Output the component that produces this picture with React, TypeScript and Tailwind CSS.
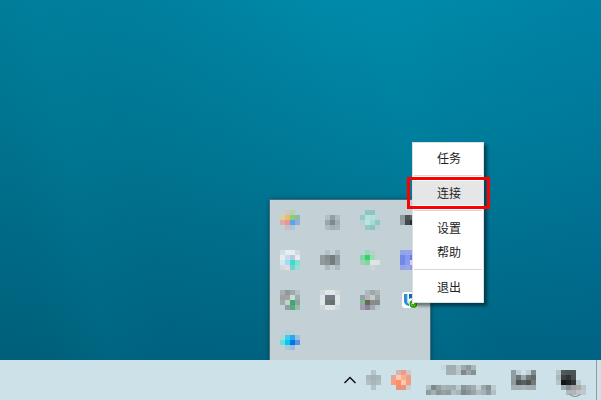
type Cells = string[];

const cellSize = 5;

function Mosaic({ rows, label }: { rows: Cells; label: string }) {
  const grid = rows.map((row) => row.split(" "));
  const width = Math.max(...grid.map((r) => r.length)) * cellSize;
  const height = grid.length * cellSize;
  return (
    <svg width={width} height={height} viewBox={`0 0 ${width} ${height}`} role="img" aria-label={label} shapeRendering="crispEdges" className="block shrink-0">
      {grid.map((row, y) =>
        row.map((color, x) =>
          color === "-" ? null : (
            <rect key={`${x}-${y}`} x={x * cellSize} y={y * cellSize} width={cellSize} height={cellSize} fill={`#${color}`} />
          ),
        ),
      )}
    </svg>
  );
}

const trayApps: { name: string; rows: Cells }[] = [
  { name: "App 1", rows: ["- cdc9c0 b6d3ad -", "d2d3a0 ecba70 88d070 8bbbac", "e1aa9f e59796 5da4ee 8faed9", "- c7bec3 a9c7dc -"] },
  { name: "App 2", rows: ["- - - -", "- b2bfc4 939fa2 aebac0", "- 9aa6aa 7e8989 a2adb1", "- afbcc1 a2afb3 a7b4b8"] },
  { name: "App 3", rows: ["- 8cc6c2 8cc6c2 -", "94cbc6 b5e1dc b2dfdb b8d4d6", "b5d1d4 bce4df a5d9d2 91c7c3", "- 94c8c3 8bc4bf b9cfd3"] },
  { name: "App 4", rows: ["- - - -", "8c989d 4d5356 5b6367 747d80", "939fa4 45494c 272b2f 555b5e", "- - - -"] },
  { name: "App 5", rows: ["d3dfe2 e7eef0 e8eef0 d0dbde", "e5eced c6dce8 b7c9e3 e8eced", "d6e8ed 9bdcf7 42dac8 83e0cf", "cddbde ead7df 69d8cb 9bded5"] },
  { name: "App 6", rows: ["- b1c1c5 - aebdc2", "8f9b9f 848e91 747d7e 909b9e", "8f9a9e 899393 747d7e 949fa2", "- adbabd c0cbcd aebbbe"] },
  { name: "App 7", rows: ["- 9cd5b7 b9d1cd -", "7cd7a1 31d36a 9bdcb4 bfd2d5", "9dd2b8 85d4a1 dde4e3 e1e3e3", "- c1d2d5 cbd6d9 -"] },
  { name: "App 8", rows: ["91a4e7 93a5e9 94a5ea 91a4e7", "7188e8 8997ec 627fee 7188e8", "7188e8 8e9aea d4d3ed 7188e8", "94a5e1 99aaea 8998ea 91a4e7"] },
  { name: "App 9", rows: ["a4b0b2 8f999b 9fa9ac b5c1c7", "9fa0a1 a4a09f c9ddd4 a0acae", "9eaaac c2d2ca 42a76d 8fa49e", "- 929f9f 59a982 97bdad"] },
  { name: "App 10", rows: ["cfd9db e0e5e7 e0e5e7 cfd9db", "dfe5e7 7b788b 797887 dfe5e7", "e2e7e9 657975 61736f dfe5e7", "cdd8da dfe5e7 dfe5e7 cfd9db"] },
  { name: "App 11", rows: ["- adbabc 9ea8aa aab5b8", "95a0a3 b2b3bb c9c9cd 9da5a6", "83b795 676a50 898b8b 878b8c", "b197b3 8783a5 a0abad b8c7ca"] },
];

const lastApp: Cells = ["- bccfd7 bccfd7 -", "aed7d5 3cd1eb 2ca3f6 9fbfd9", "69ded2 00cafa 0073ec 5796df", "- a2cbd9 9bbad8 -"];

function SyncIcon() {
  return (
    <svg width="20" height="20" viewBox="0 0 20 20" role="img" aria-label="Sync client" className="block">
      <rect x="2" y="2" width="16" height="16" rx="3" fill="#fff" />
      <path d="M4 4h3v7q0 2 2 3v2q-5-1-5-5z" fill="#2f8ccc" />
      <path d="M7.500 4v6.500q0 2 2 3" fill="none" stroke="#a5dcf2" strokeWidth="1.200" />
      <path d="M9 4h5v6l-3-2-2 1z" fill="#1c61b6" />
      <circle cx="13.500" cy="14" r="3" fill="#fff" stroke="#36a10c" strokeWidth="2" />
      <path d="m12 14 1.500 1.500 2.500-3" fill="none" stroke="#36a10c" strokeWidth="1.200" />
    </svg>
  );
}

function Item({ children, selected = false }: { children: string; selected?: boolean }) {
  return (
    <li role="none" className="relative">
      <button
        role="menuitem"
        className={`block h-6 w-full pl-0.5 text-center text-xs leading-6 text-[#222] ${selected ? "bg-[#e6e6e6]" : "bg-white"}`}
      >
        {children}
      </button>
      {selected && <span className="pointer-events-none absolute -top-1 -right-[7px] -bottom-1 -left-1.5 border-3 border-[#ff0000]" />}
    </li>
  );
}

function Divider() {
  return <li role="separator" className="mx-px my-[5px] h-px bg-[#d7d7d7]" />;
}

function ContextMenu() {
  return (
    <ul role="menu" className="absolute bottom-[57px] left-[142px] w-[72px] border border-[#dcdfe3] bg-white py-[3px] shadow-[3px_3px_3px_rgba(0,0,0,0.45)]">
      <Item>任务</Item>
      <Divider />
      <Item selected>连接</Item>
      <Divider />
      <Item>设置</Item>
      <Item>帮助</Item>
      <Divider />
      <Item>退出</Item>
    </ul>
  );
}

function TrayFlyout() {
  return (
    <section aria-label="Hidden icons" className="relative w-40 bg-[#c3d1d7] shadow-[0_0_5px_rgba(0,0,0,0.5)] outline outline-[#3f6e7c]">
      <div className="grid grid-cols-4 gap-5 p-2.5">
        {trayApps.map((app) => (
          <Mosaic key={app.name} label={app.name} rows={app.rows} />
        ))}
        <SyncIcon />
        <Mosaic label="App 12" rows={lastApp} />
      </div>
      <ContextMenu />
    </section>
  );
}

function Taskbar() {
  return (
    <footer className="relative flex h-10 items-center justify-end bg-[#cde1e8]">
      <button aria-label="Show hidden icons" className="mr-[9px] block">
        <svg width="14" height="8" viewBox="0 0 14 8" className="block">
          <path d="M1.500 7 7 1.500 12.500 7" fill="none" stroke="#111" strokeWidth="1.500" />
        </svg>
      </button>
      <div className="mr-2.5">
        <Mosaic label="Tray 1" rows={["- b2c5cb -", "aab8bc a6b1b3 aab6b9", "b2c0c4 aab5b7 b0bcc0", "- b1c4ca -"]} />
      </div>
      <div className="mr-[15px]">
        <Mosaic label="Tray 2" rows={["- d6b4ac e69e87 d4c7c4", "dfa898 ffcab6 ffab8d e7a08a", "ff9c79 ff9066 ffc5b0 f49c7d", "- e99277 ea9478 cfcdcd"]} />
      </div>
      <div className="mr-[15px] flex h-[30px] flex-col items-start justify-between">
        <div className="pl-[15px]">
          <Mosaic label="Time" rows={["c6d8de a0adb2 a0adb1 b8c8cd 9eaaae 8d989b aab6ba", "- a3b1b5 a2b0b4 b6c5ca 7e898b 98a4a7 869194"]} />
        </div>
        <Mosaic
          label="Date"
          rows={[
            "b2c1c7 7e898c 94a0a4 a6b4b8 a1aeb2 a0adb1 bbcace 88959a 96a2a6 a0adb1 c2d3d8 9ba8ac 839094 bccbd0",
            "909c9f a3afb3 899598 95a2a5 909c9f b0bfc3 a7b5b9 7d898c 899598 98a4a8 aebdc2 a5b3b7 8e9b9e b0bfc3",
          ]}
        />
      </div>
      <div className="mr-5">
        <Mosaic label="Input method" rows={["8f9da2 bdced4 - bdced4 82898a", "929da1 6d7475 9ca9ac 6f7778 646b6b", "8e999c 4d5353 5a6161 4c5253 717878", "a3b0b5 a2afb3 a8b6ba a2afb3 a0acb0"]} />
      </div>
      <div className="relative mt-[5px] mr-2.5">
        <Mosaic
          label="Notifications"
          rows={[
            "b5c4c9 51595a 4b5354 4b5354 - -",
            "aab7bb 394142 2e3435 485051 - -",
            "b5c4c9 111718 1c2121 333434 bac5c8 -",
            "- a0adb2 879093 a3a2a2 aaa9aa b9c4c8",
            "- - adb9bc b2b5b7 c1c3c4 bcc9ce",
          ]}
        />
        <svg width="14" height="4" viewBox="0 0 14 4" className="absolute -bottom-[3px] left-3 block">
          <path d="M1 0q6 5 12 0" fill="none" stroke="#80898c" />
        </svg>
      </div>
      <button aria-label="Show desktop" className="h-10 w-[5px] border-l border-[#8f9da2]" />
    </footer>
  );
}

export default function App() {
  return (
    <div className="flex min-h-screen flex-col font-['Microsoft_YaHei','Noto_Sans_CJK_SC',sans-serif]">
      <main className="flex flex-1 items-end justify-end overflow-hidden bg-[linear-gradient(78deg,transparent_8%,rgba(0,150,175,0.08)_16%,transparent_26%,transparent_62%,rgba(0,150,185,0.07)_67%,transparent_74%),linear-gradient(75deg,rgba(0,84,104,0.3)_0%,rgba(0,90,112,0.2)_35%,transparent_60%),linear-gradient(90deg,transparent_70%,rgba(0,90,140,0.16)_100%),linear-gradient(180deg,#0089a9_0%,#007d9b_40%,#006482_100%)] pr-[171px]">
        <TrayFlyout />
      </main>
      <Taskbar />
    </div>
  );
}
